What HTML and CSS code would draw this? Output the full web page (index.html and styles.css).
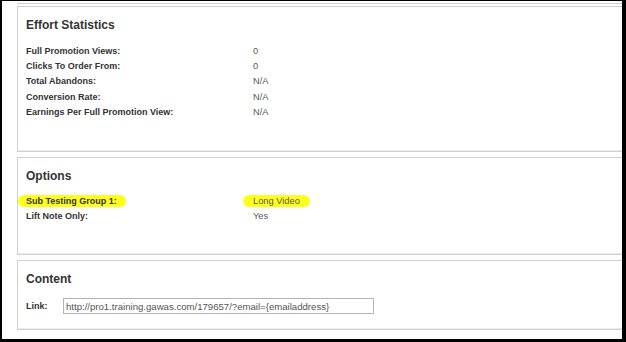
FILE: index.html
```html
<!DOCTYPE html>
<html lang="en">
<head>
    <meta charset="UTF-8">
    <title>Promotion Details</title>
    <link rel="stylesheet" href="styles.css">
</head>
<body>
    <div class="frame">
        <div class="panel cut"></div>

        <div class="panel stats">
            <h3>Effort Statistics</h3>
            <div class="rows">
                <span class="label">Full Promotion Views:</span><span class="value">0</span>
                <span class="label">Clicks To Order From:</span><span class="value">0</span>
                <span class="label">Total Abandons:</span><span class="value">N/A</span>
                <span class="label">Conversion Rate:</span><span class="value">N/A</span>
                <span class="label">Earnings Per Full Promotion View:</span><span class="value">N/A</span>
            </div>
        </div>

        <div class="panel options">
            <h3>Options</h3>
            <div class="rows">
                <span class="label"><mark class="hl hl-label">Sub Testing Group 1:</mark></span><span class="value"><mark class="hl hl-value">Long Video</mark></span>
                <span class="label">Lift Note Only:</span><span class="value">Yes</span>
            </div>
        </div>

        <div class="panel content">
            <h3>Content</h3>
            <div class="link-row">
                <label for="link">Link:</label>
                <input type="text" id="link" value="http://pro1.training.gawas.com/179657/?email={emailaddress}">
            </div>
        </div>
    </div>
</body>
</html>
```

FILE: styles.css
```css
body {
    margin: 0;
    font-family: "Liberation Sans", Arial, sans-serif;
    background: #fff;
}
.frame {
    box-sizing: border-box;
    width: 626px;
    height: 342px;
    overflow: hidden;
    border-style: solid;
    border-color: #000;
    border-width: 1px 4px 3px 2px;
    padding: 2px 0 0 15px;
}
.panel {
    border: 1px solid #d0d0d0;
    border-right: none;
    box-shadow: inset 0 -1px 0 #ececec;
    padding: 11px 0 0 8px;
    margin-bottom: 5px;
}
.panel.cut {
    height: 0;
    padding: 0;
    border-top: none;
    margin-bottom: 2px;
    box-shadow: none;
}
.panel h3 {
    margin: 0 0 12px;
    font-size: 12px;
    line-height: 14px;
    font-weight: bold;
    color: #333;
}
.rows {
    display: grid;
    grid-template-columns: 227px auto;
    font-size: 9px;
    line-height: 15.2px;
}
.label {
    font-weight: bold;
    color: #333;
}
.value {
    font-size: 9.3px;
    color: #5a5a5a;
}
.stats {
    height: 133px;
}
.options {
    height: 85px;
}
.options h3 {
    margin-bottom: 11px;
}
.hl {
    background: #ffff1c;
    color: inherit;
    border-radius: 6px;
    padding: 1px 9px 1px 8px;
    margin-left: -8px;
}
.hl-value {
    padding: 1px 10px;
    margin-left: -10px;
}
.content {
    height: 57px;
}
.link-row {
    display: flex;
    align-items: center;
    font-size: 9px;
}
.link-row label {
    width: 37px;
    font-weight: bold;
    color: #333;
}
.link-row input {
    box-sizing: border-box;
    width: 311px;
    height: 16px;
    margin: 0;
    padding: 0 2px;
    border: 1px solid #b4b4b4;
    font-family: "Liberation Sans", Arial, sans-serif;
    font-size: 9.6px;
    color: #555;
}
```
